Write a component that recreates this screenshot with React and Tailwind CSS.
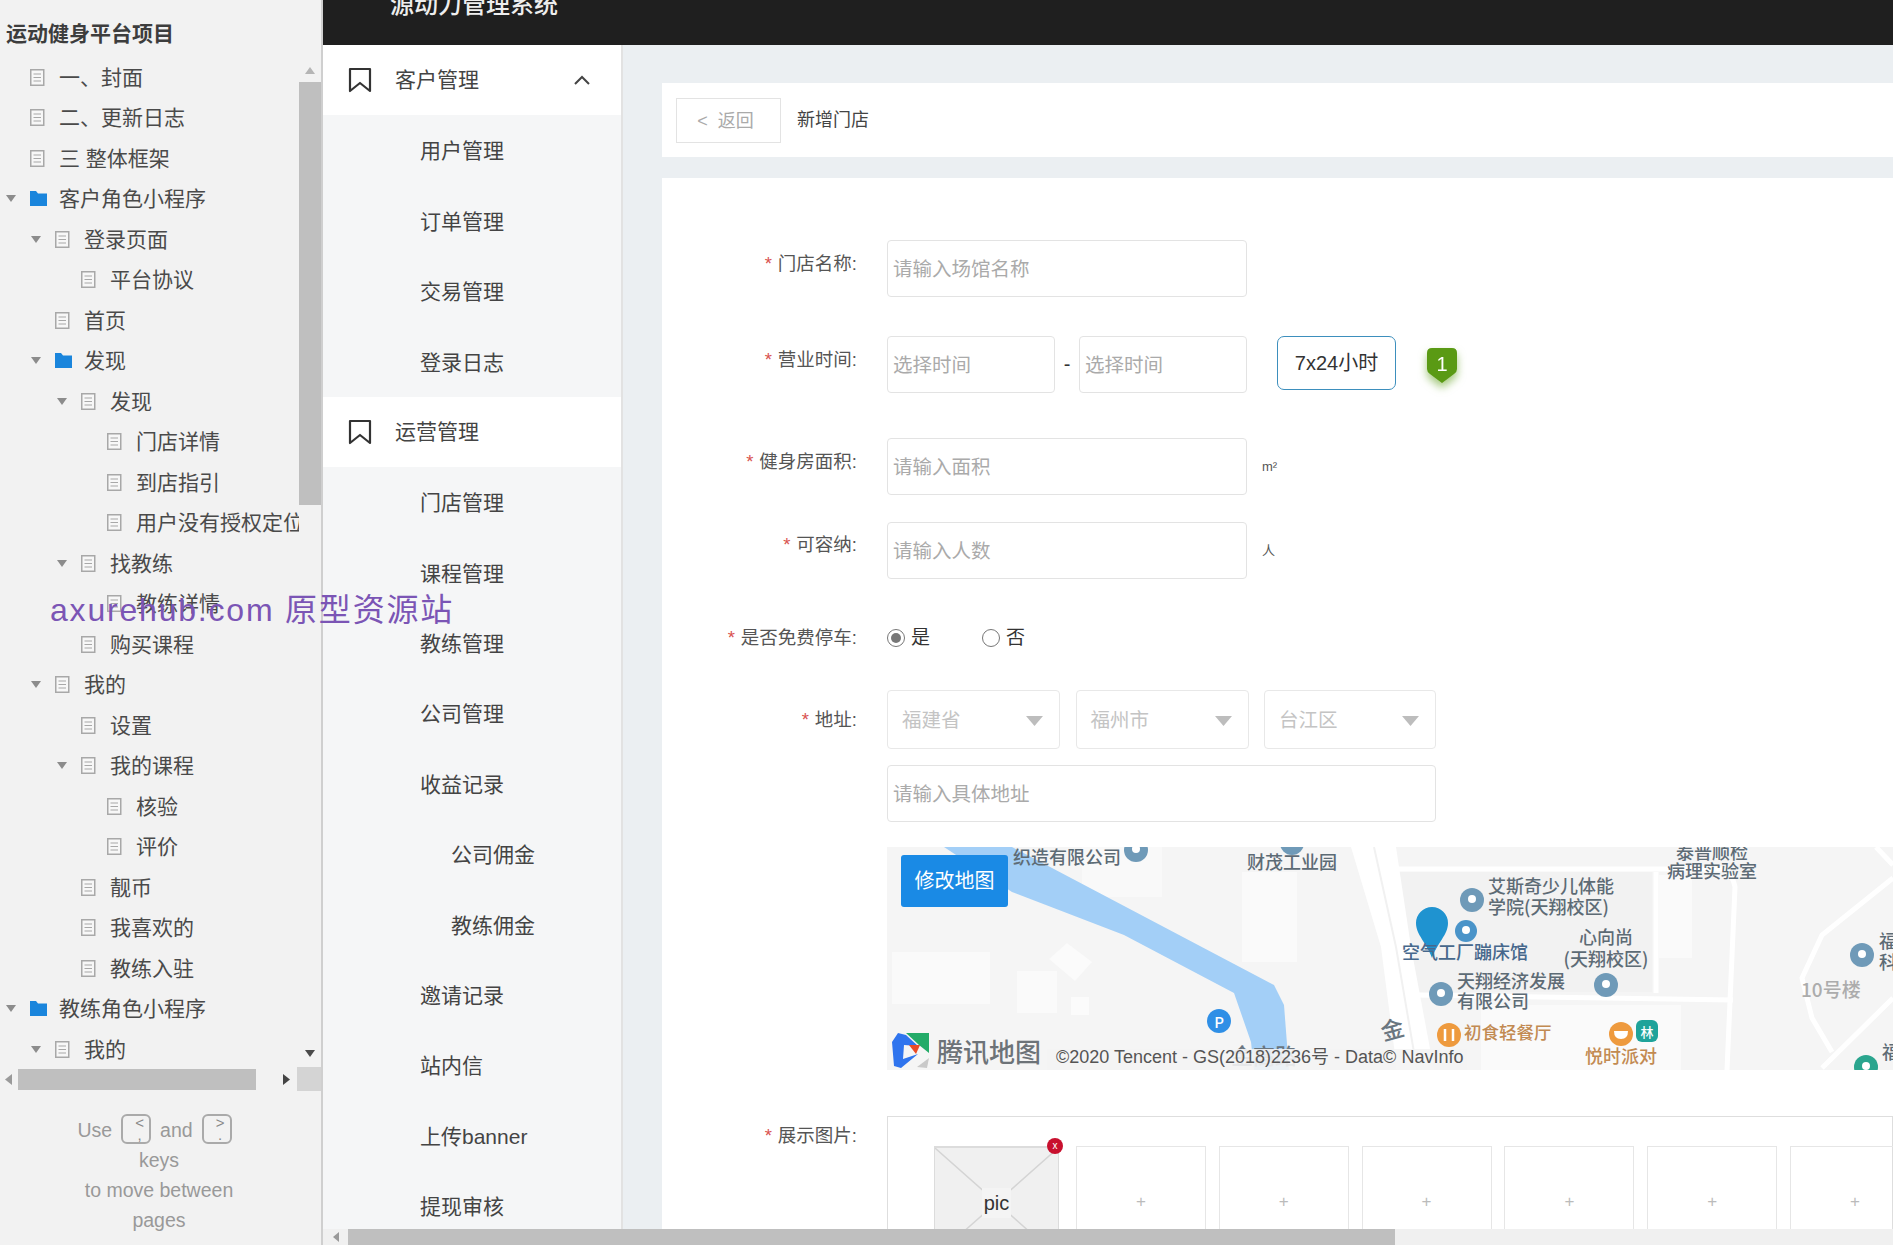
import React from 'react';

const TREE = [
    { label: '一、封面', level: 0 },
    { label: '二、更新日志', level: 0 },
    { label: '三 整体框架', level: 0 },
    { label: '客户角色小程序', level: 0, arrow: true, folder: true },
    { label: '登录页面', level: 1, arrow: true },
    { label: '平台协议', level: 2 },
    { label: '首页', level: 1 },
    { label: '发现', level: 1, arrow: true, folder: true },
    { label: '发现', level: 2, arrow: true },
    { label: '门店详情', level: 3 },
    { label: '到店指引', level: 3 },
    { label: '用户没有授权定位', level: 3 },
    { label: '找教练', level: 2, arrow: true },
    { label: '教练详情', level: 3 },
    { label: '购买课程', level: 2 },
    { label: '我的', level: 1, arrow: true },
    { label: '设置', level: 2 },
    { label: '我的课程', level: 2, arrow: true },
    { label: '核验', level: 3 },
    { label: '评价', level: 3 },
    { label: '靓币', level: 2 },
    { label: '我喜欢的', level: 2 },
    { label: '教练入驻', level: 2 },
    { label: '教练角色小程序', level: 0, arrow: true, folder: true },
    { label: '我的', level: 1, arrow: true },
];

const LEVEL_PADDING = ['pl-[6px]', 'pl-[31px]', 'pl-[57px]', 'pl-[83px]'];

const NAV = [
    { label: '客户管理', head: true, open: true },
    { label: '用户管理' },
    { label: '订单管理' },
    { label: '交易管理' },
    { label: '登录日志' },
    { label: '运营管理', head: true },
    { label: '门店管理' },
    { label: '课程管理' },
    { label: '教练管理' },
    { label: '公司管理' },
    { label: '收益记录' },
    { label: '公司佣金', deep: true },
    { label: '教练佣金', deep: true },
    { label: '邀请记录' },
    { label: '站内信' },
    { label: '上传banner' },
    { label: '提现审核' },
];

const DocIcon = () => (
    <svg width="15" height="17" viewBox="0 0 15 17" className="flex-shrink-0">
        <rect x="0.75" y="0.75" width="13" height="15.5" fill="#f7f7f7" stroke="#a8a8a8" strokeWidth="1.5" />
        <path d="M3.5 5h7.5M3.5 8.5h7.5M3.5 12h7.5" stroke="#a8a8a8" strokeWidth="1.2" />
    </svg>
);

const FolderIcon = () => (
    <svg width="17" height="15" viewBox="0 0 17 15" className="flex-shrink-0">
        <path d="M0 0h6l2 2.5h9V15H0z" fill="#1a85dc" />
    </svg>
);

const Triangle = ({ color = '#8c8c8c', w = 10, h = 7, dir = 'down' }) => {
    const points = {
        down: `0,0 ${w},0 ${w / 2},${h}`,
        up: `0,${h} ${w},${h} ${w / 2},0`,
        left: `${w},0 ${w},${h} 0,${h / 2}`,
        right: `0,0 ${w},${h / 2} 0,${h}`,
    };
    return (
        <svg width={w} height={h} viewBox={`0 0 ${w} ${h}`} className="flex-shrink-0">
            <polygon points={points[dir]} fill={color} />
        </svg>
    );
};

const TreeRow = ({ item }) => (
    <div className={`flex items-center h-[40.5px] whitespace-nowrap ${LEVEL_PADDING[item.level]}`}>
        <span className="w-[20px] flex-shrink-0 flex items-center">{item.arrow && <Triangle />}</span>
        <span className="w-[33px] flex-shrink-0 flex items-center pl-[4px]">
            {item.folder ? <FolderIcon /> : <DocIcon />}
        </span>
        <span className="text-[21px] text-[#4a4a4a]">{item.label}</span>
    </div>
);

const KeyCap = ({ top, bottom }) => (
    <span className="inline-flex flex-col w-[30px] h-[30px] mx-[9px] pl-[7px] border-2 border-[#aaa] rounded-[6px] text-[15px] leading-[12px] text-[#888] align-middle pt-[1px] -mt-[6px]">
        <span>{top}</span>
        <span>{bottom}</span>
    </span>
);

const Sidebar = () => (
    <aside className="w-[323px] flex-shrink-0 h-full bg-[#f2f2f2] border-r-2 border-[#cfcfcf] flex flex-col overflow-hidden">
        <div className="h-[57px] flex-shrink-0 pl-[6px] pt-[20px] text-[21px] leading-[28px] font-bold text-[#3d3d3d]">运动健身平台项目</div>
        <div className="h-[1010px] flex-shrink-0 flex overflow-hidden">
            <div className="w-[299px] flex-shrink-0 overflow-hidden">
                {TREE.map((item, i) => <TreeRow key={i} item={item} />)}
            </div>
            <div className="w-[22px] flex-shrink-0 flex flex-col items-center">
                <div className="h-[25px] flex-shrink-0 flex items-center justify-center pt-[2px]"><Triangle color="#b5b5b5" dir="up" /></div>
                <div className="w-full h-[423px] flex-shrink-0 bg-[#bfbfbf]" />
                <div className="flex-1 flex items-end pb-[10px]"><Triangle color="#4a4a4a" /></div>
            </div>
        </div>
        <div className="h-[24px] flex-shrink-0 flex items-center">
            <div className="w-[18px] flex items-center justify-center"><Triangle color="#9a9a9a" w={7} h={11} dir="left" /></div>
            <div className="w-[239px] h-[21px] bg-[#bfbfbf]" />
            <div className="w-[41px] flex items-center justify-end pr-[7px]"><Triangle color="#444" w={7} h={11} dir="right" /></div>
            <div className="w-[24px] h-[24px] bg-[#d4d4d4]" />
        </div>
        <div className="pt-[24px] pr-[3px] text-center text-[19.5px] leading-[30px] text-[#999]">
            <div>Use<KeyCap top="<" bottom="," />and<KeyCap top=">" bottom="." /></div>
            <div>keys</div>
            <div>to move between</div>
            <div>pages</div>
        </div>
    </aside>
);

const BookmarkIcon = () => (
    <svg width="24" height="26" viewBox="0 0 24 26" fill="none" stroke="#333" strokeWidth="2.2" strokeLinejoin="round">
        <path d="M2 2h20v22l-10-8-10 8z" />
    </svg>
);

const SubNav = () => (
    <nav className="w-[300px] flex-shrink-0 h-full bg-[#f5f6f7] border-r-2 border-[#e2e2e2] overflow-hidden">
        {NAV.map((item) =>
            item.head ? (
                <div key={item.label} className="h-[70.4px] bg-white flex items-center pl-[25px] text-[21px] text-[#444]">
                    <BookmarkIcon />
                    <span className="ml-[23px]">{item.label}</span>
                    {item.open && (
                        <svg width="16" height="10" viewBox="0 0 16 10" fill="none" stroke="#444" strokeWidth="2" className="ml-[95px]">
                            <path d="M1 9l7-7 7 7" />
                        </svg>
                    )}
                </div>
            ) : (
                <div key={item.label} className={`h-[70.4px] flex items-center pt-[1px] text-[21px] text-[#444] ${item.deep ? 'pl-[128px]' : 'pl-[97px]'}`}>
                    {item.label}
                </div>
            )
        )}
    </nav>
);

const inputClass = 'bg-white border border-[#e3e3e3] rounded-[4px] pl-[5px] pt-[2px] text-[19.5px] text-[#333] outline-none placeholder:text-[#aaa]';

const Field = ({ label, offset, className, children }) => (
    <div className={`flex items-start ${className}`}>
        <div className={`w-[195px] flex-shrink-0 text-right text-[18.5px] leading-[28px] text-[#555] whitespace-nowrap ${offset}`}>
            <span className="text-[#d9534f] mr-[6px]">*</span>{label}:
        </div>
        <div className="ml-[30px] flex-1 min-w-0">{children}</div>
    </div>
);

const Select = ({ value, className }) => (
    <div className={`h-[59px] bg-white border border-[#e8e8e8] rounded-[4px] flex items-center justify-between pl-[14px] pr-[16px] pt-[2px] text-[19.5px] text-[#c4c4c4] ${className}`}>
        <span>{value}</span>
        <Triangle color="#bdbdbd" w={17} h={10} />
    </div>
);

const Poi = ({ x, y, color = '#6f9ab8', r = 12 }) => (
    <g>
        <circle cx={x} cy={y} r={r} fill={color} />
        <circle cx={x} cy={y - 1} r="4" fill="#fff" />
    </g>
);

const MapLabel = ({ x, y, children, fill = '#5d6b75', size = 18, anchor = 'start' }) => (
    <text x={x} y={y - 2} fill={fill} fontSize={size} fontWeight="500" textAnchor={anchor} dominantBaseline="central" fontFamily="'Noto Sans CJK SC', sans-serif">
        {children}
    </text>
);

const MapPicture = () => (
    <svg width="1006" height="223" viewBox="0 0 1006 223" className="block">
        <rect width="1006" height="223" fill="#f5f5f5" />
        {/* lighter building blocks */}
        <rect x="195" y="0" width="80" height="50" fill="#f9f9f9" />
        <rect x="355" y="25" width="55" height="90" fill="#fafafa" />
        <rect x="5" y="105" width="98" height="52" fill="#fafafa" />
        <polygon points="162,112 180,96 205,115 188,134" fill="#fbfbfb" />
        <rect x="130" y="124" width="40" height="42" fill="#fafafa" />
        <rect x="184" y="150" width="18" height="18" fill="#fbfbfb" />
        <rect x="510" y="25" width="255" height="120" fill="#f2f2f2" />
        <rect x="772" y="28" width="33" height="83" fill="#fafafa" />
        <rect x="594" y="158" width="200" height="65" fill="#fafafa" />
        {/* roads */}
        <polygon points="464,0 509,0 524,100 547,223 510,223 494,100" fill="#fff" />
        <path d="M487 0 L509 100 L530 223" stroke="#f1f1f1" strokeWidth="2" fill="none" />
        <path d="M510 22 H835 Q845 25 848 40 L840 223 M769 25 V146 M527 148 L846 153 M1006 31 L935 88 L915 131 L925 171 L945 205 M1006 151 L935 221 M989 0 L1006 18" stroke="#fff" strokeWidth="5" fill="none" />
        {/* river */}
        <polygon points="57,0 125,0 387,138 397,158 402,223 367,223 364,195 347,146 237,88 125,45" fill="#a3cff7" />
        <MapLabel x="126" y="11">织造有限公司</MapLabel>
        <Poi x="249" y="3" />
        <Poi x="405" y="-4" />
        <MapLabel x="360" y="16">财茂工业园</MapLabel>
        <MapLabel x="789" y="6">泰普顺检</MapLabel>
        <MapLabel x="780" y="25">病理实验室</MapLabel>
        <MapLabel x="601" y="40">艾斯奇少儿体能</MapLabel>
        <MapLabel x="601" y="61">学院(天翔校区)</MapLabel>
        <Poi x="585" y="53" />
        <Poi x="579" y="84" color="#4a94c9" r={11} />
        <path d="M529 76 A16 16 0 0 1 561 76 C561 88 550 96 545 111 C540 96 529 88 529 76z" fill="#1f93d0" />
        <MapLabel x="515" y="106" fill="#47688c">空气工厂蹦床馆</MapLabel>
        <MapLabel x="719" y="91" anchor="middle">心向尚</MapLabel>
        <MapLabel x="719" y="113" anchor="middle">(天翔校区)</MapLabel>
        <MapLabel x="570" y="135">天翔经济发展</MapLabel>
        <MapLabel x="570" y="155">有限公司</MapLabel>
        <Poi x="554" y="147" />
        <Poi x="719" y="138" />
        <circle cx="562" cy="188" r="12" fill="#ee9a3e" />
        <path d="M558 182v12M566 182v12" stroke="#fff" strokeWidth="2.5" />
        <MapLabel x="577" y="186" fill="#c28a52" size="17.5">初食轻餐厅</MapLabel>
        <circle cx="734" cy="187" r="12" fill="#ee9a3e" />
        <path d="M727 184h14q0 8-7 8t-7-8z" fill="#fff" />
        <rect x="749" y="173" width="22" height="22" rx="6" fill="#1fa39a" />
        <MapLabel x="760" y="186" fill="#fff" size="13" anchor="middle">林</MapLabel>
        <MapLabel x="734" y="210" fill="#c28a52" anchor="middle">悦时派对</MapLabel>
        <MapLabel x="914" y="143" fill="#acacac" size="19">10号楼</MapLabel>
        <Poi x="975" y="108" />
        <MapLabel x="992" y="95">福</MapLabel>
        <MapLabel x="992" y="116">科</MapLabel>
        <Poi x="979" y="220" color="#2aa58e" />
        <MapLabel x="995" y="206">福</MapLabel>
        <circle cx="332" cy="174" r="12" fill="#2f8fe6" />
        <MapLabel x="332" y="176" fill="#fff" size="15" anchor="middle">P</MapLabel>
        <MapLabel x="344" y="209" size="22" fill="#6a7680">金高路</MapLabel>
        <g transform="rotate(-15 505 181)"><MapLabel x="505" y="183" size="23" anchor="middle" fill="#6a7680">金</MapLabel></g>
        {/* copyright strip fades what is beneath it */}
        <rect x="160" y="202" width="420" height="21" fill="#f4f4f4" opacity="0.9" />
        {/* tencent logo */}
        <polygon points="5,195 11,186 19,188 31,199 17,198 16,212 31,207 14,221 7,219" fill="#2f74ee" />
        <polygon points="19,186 42,186 42,206 32,198" fill="#23ab68" />
        <polygon points="22,198 33,198 29,207" fill="#ea4b25" />
        <polygon points="30,220 42,211 40,221" fill="#c9c9c9" />
        <MapLabel x="50" y="205" size="26" fill="#6d7378">腾讯地图</MapLabel>
        <text x="169" y="210" fill="#555" fontSize="18" dominantBaseline="central" fontFamily="'Liberation Sans', 'Noto Sans CJK SC', sans-serif">©2020 Tencent - GS(2018)2236号 - Data© NavInfo</text>
    </svg>
);

const PicSlot = () => (
    <div className="relative w-[125px] h-[112px] flex-shrink-0 mr-[4.2px] bg-[#f0f0f0] border border-[#dcdcdc] border-t-2 flex items-center justify-center">
        <svg className="absolute inset-0 w-full h-full" viewBox="0 0 125 112" preserveAspectRatio="none">
            <path d="M0 0L125 112M125 0L0 112" stroke="#d4d4d4" strokeWidth="1.5" />
        </svg>
        <span className="relative bg-[#f4f4f4] px-[2px] text-[20px] leading-[30px] text-[#333]">pic</span>
        <span className="absolute -top-[10px] -right-[5px] w-[16px] h-[16px] rounded-full bg-[#c8102e] text-white text-[10px] leading-[15px] text-center">x</span>
    </div>
);

const EmptySlot = () => (
    <div className="w-[130px] h-[112px] flex-shrink-0 border border-[#e6e6e6] flex items-center justify-center text-[17px] text-[#bbb]">+</div>
);

const Form = () => (
    <div className="bg-white pt-[62px] h-[1200px]">
        <Field label="门店名称" offset="pt-[10px]">
            <input readOnly placeholder="请输入场馆名称" className={`${inputClass} w-[360px] h-[57px]`} />
        </Field>
        <Field label="营业时间" offset="pt-[10px]" className="mt-[39px]">
            <div className="flex items-start h-[57px]">
                <input readOnly placeholder="选择时间" className={`${inputClass} w-[168px] h-[57px]`} />
                <span className="w-[24px] text-center text-[20px] leading-[57px] text-[#333]">-</span>
                <input readOnly placeholder="选择时间" className={`${inputClass} w-[168px] h-[57px]`} />
                <button className="ml-[30px] w-[119px] h-[54px] bg-white border border-[#3d8fbd] rounded-[7px] text-[20px] text-[#333]">7x24小时</button>
                <span className="relative ml-[31px] mt-[12px] w-[30px] h-[35px] drop-shadow-[0_5px_4px_rgba(90,154,20,0.55)]">
                    <svg width="30" height="35" viewBox="0 0 30 35" className="absolute inset-0">
                        <path d="M5 0h20q5 0 5 5v16q0 3-3 5l-12 9-12-9q-3-2-3-5V5q0-5 5-5z" fill="#5a9a14" />
                    </svg>
                    <span className="absolute inset-x-0 top-[3px] text-center text-[20px] leading-[26px] text-white">1</span>
                </span>
            </div>
        </Field>
        <Field label="健身房面积" offset="pt-[10px]" className="mt-[45px]">
            <div className="flex items-center h-[57px]">
                <input readOnly placeholder="请输入面积" className={`${inputClass} w-[360px] h-[57px]`} />
                <span className="ml-[15px] text-[13px] text-[#555]">m²</span>
            </div>
        </Field>
        <Field label="可容纳" offset="pt-[9px]" className="mt-[27px]">
            <div className="flex items-center h-[57px]">
                <input readOnly placeholder="请输入人数" className={`${inputClass} w-[360px] h-[57px]`} />
                <span className="ml-[15px] text-[13px] text-[#555]">人</span>
            </div>
        </Field>
        <Field label="是否免费停车" offset="" className="mt-[45px] h-[28px]">
            <div className="flex items-center h-[28px] text-[19px] text-[#333]">
                <span className="w-[18px] h-[18px] rounded-full border border-[#777] flex items-center justify-center">
                    <span className="w-[10px] h-[10px] rounded-full bg-[#777]" />
                </span>
                <span className="ml-[6px] w-[71px]">是</span>
                <span className="w-[18px] h-[18px] rounded-full border border-[#777]" />
                <span className="ml-[6px]">否</span>
            </div>
        </Field>
        <Field label="地址" offset="pt-[16px]" className="mt-[38px]">
            <div className="flex gap-[15.5px]">
                <Select value="福建省" className="w-[173px]" />
                <Select value="福州市" className="w-[173px]" />
                <Select value="台江区" className="w-[172px]" />
            </div>
            <input readOnly placeholder="请输入具体地址" className={`${inputClass} block w-[549px] h-[57px] mt-[16px]`} />
            <div className="relative mt-[25px] overflow-hidden">
                <MapPicture />
                <button className="absolute left-[14px] top-[8px] w-[107px] h-[52px] bg-[#1a8ae5] rounded-[3px] text-[20px] text-white">修改地图</button>
            </div>
        </Field>
        <Field label="展示图片" offset="pt-[6px]" className="mt-[46px]">
            <div className="h-[200px] border border-[#dedede] pl-[46px] pt-[29px] flex items-start gap-[12.8px]">
                <PicSlot />
                {[0, 1, 2, 3, 4, 5].map((i) => <EmptySlot key={i} />)}
            </div>
        </Field>
    </div>
);

const Content = () => (
    <main className="flex-1 min-w-0 h-full bg-[#ebeff2] pl-[39px] pt-[38px] overflow-hidden">
        <div className="h-[74px] bg-white flex items-center pl-[14px] mb-[21px]">
            <div className="w-[105px] h-[45px] border border-[#e3e3e3] flex items-center justify-center pt-[2px] pr-[6px] text-[18px] text-[#aaa]">&lt;&nbsp;&nbsp;返回</div>
            <span className="ml-[16px] pt-[1px] text-[18px] text-[#444]">新增门店</span>
        </div>
        <Form />
    </main>
);

const App = () => (
    <div className="relative flex w-[1893px] h-[1245px] overflow-hidden bg-white font-['Liberation_Sans','Noto_Sans_CJK_SC',sans-serif]">
        <Sidebar />
        <div className="flex-1 min-w-0 h-full flex flex-col">
            <header className="h-[45px] flex-shrink-0 bg-[#1f1f1f] pl-[67px] overflow-hidden">
                <div className="-mt-[10px] text-[24px] leading-[30px] font-medium text-[#eee]">源动力管理系统</div>
            </header>
            <div className="flex-1 min-h-0 flex">
                <SubNav />
                <Content />
            </div>
            <div className="h-[16px] flex-shrink-0 bg-[#f0f0f0] flex items-center">
                <div className="w-[25px] flex justify-center"><Triangle color="#999" w={6} h={10} dir="left" /></div>
                <div className="w-[1047px] h-[16px] bg-[#bfbfbf]" />
            </div>
        </div>
        <div className="absolute left-[50px] top-[588px] text-[32px] leading-[44px] tracking-[1.8px] text-[#7b55b5] whitespace-nowrap">axurehub.com 原型资源站</div>
    </div>
);

export default App;
